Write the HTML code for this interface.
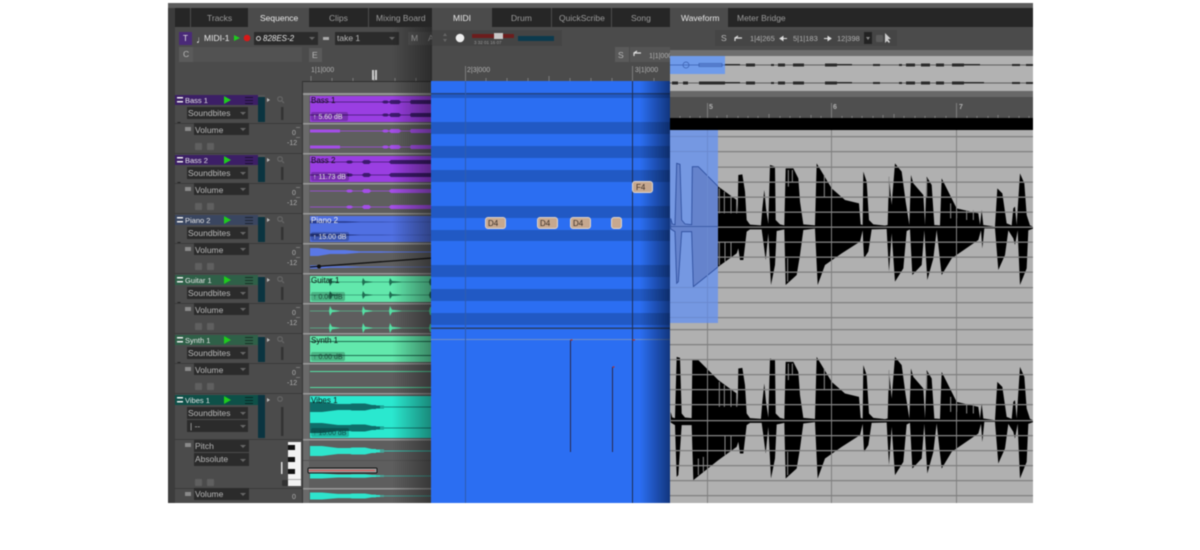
<!DOCTYPE html>
<html><head><meta charset="utf-8"><style>
html,body{margin:0;padding:0;background:#fff;width:1200px;height:550px;overflow:hidden}
svg{display:block;filter:blur(.5px)}
text{font-family:"Liberation Sans",sans-serif;font-size:8px;fill:#c4c4c4}
.t{font-size:8.5px;fill:#9a9a9a}
.a{font-size:8.5px;fill:#e8e8e8}
.n{fill:#e4e4e4;font-size:7.5px}
.d{fill:#b8b8b8;font-size:8.5px}
.c{fill:#111;font-size:8px}
.g{fill:#e8e8e8;font-size:7px}
.s{fill:#b0b0b0;font-size:7px}
</style></head><body>
<svg width="1200" height="550" viewBox="0 0 1200 550" xmlns="http://www.w3.org/2000/svg">
<defs>
<linearGradient id="sl" x1="0" x2="1" y1="0" y2="0"><stop offset="0" stop-color="#000" stop-opacity="0"/><stop offset="1" stop-color="#000" stop-opacity=".42"/></linearGradient>
<linearGradient id="sr" x1="0" x2="1" y1="0" y2="0"><stop offset="0" stop-color="#001030" stop-opacity="0"/><stop offset="1" stop-color="#001030" stop-opacity=".6"/></linearGradient>
<polygon id="wf" points="17,280 22,297 30,299 35,115 45,118 50,285 60,297 80,299 82,125 100,125 160,185 215,225 218,265 220,150 232,148 240,200 245,285 255,299 288,301 292,250 298,195 303,250 310,297 315,120 330,125 332,285 345,298 358,301 362,130 385,130 400,160 405,230 415,298 450,301 455,115 500,190 540,225 582,235 587,298 593,300 595,140 605,170 612,285 625,298 660,302 668,300 672,155 680,240 690,115 710,140 722,230 733,300 738,150 745,175 775,210 780,300 785,155 800,180 808,300 825,301 830,160 875,250 940,265 945,300 950,255 955,300 990,305 997,190 1012,205 1025,295 1040,301 1045,250 1050,245 1055,300 1065,145 1078,175 1085,270 1095,301 1104,305 1104,311 1090,316 1085,430 1065,480 1058,316 1050,360 1045,340 1030,316 1020,390 1000,435 990,310 958,310 952,370 948,316 940,345 860,400 830,450 815,315 805,400 787,465 778,316 770,420 742,450 735,313 725,318 715,430 690,470 680,325 672,440 665,312 620,313 610,380 597,400 593,316 585,350 530,385 480,420 458,480 450,311 415,315 405,390 395,450 362,480 358,313 335,318 330,420 318,480 310,325 302,405 295,350 290,313 255,313 245,320 235,405 225,405 220,370 215,385 160,425 85,485 80,320 50,320 40,470 35,475 30,320 17,312"/>
<g id="tr">
<rect x="187" y="12" width="61" height="12" fill="#2b2b2b"/><polygon points="240,17 246,17 243,20" fill="#666"/>
<rect x="258" y="0" width="7" height="27" fill="#0b3440"/><rect x="258" y="0" width="7" height="2" fill="#555"/>
<polygon points="267,3 270,5 267,7" fill="#bbb"/>
<circle cx="280" cy="4" r="2.3" fill="none" stroke="#6a6a6a"/><line x1="282" y1="6" x2="284" y2="8" stroke="#6a6a6a"/>
<rect x="281" y="12" width="2.5" height="13" fill="#333"/>
<polygon points="177,27 181,27 179,29" fill="#222"/>
<rect x="175" y="28" width="127" height="1" fill="#3a3a3a"/>
<rect x="194" y="28" width="55" height="12" fill="#2b2b2b"/><polygon points="240,33 246,33 243,36" fill="#666"/>
<rect x="185" y="32" width="6" height="4" fill="#8a8a8a"/>
<rect x="195" y="48" width="7" height="7" rx="1" fill="#5f5f5f"/><rect x="207" y="48" width="7" height="7" rx="1" fill="#5f5f5f"/>
<rect x="175" y="58" width="127" height="1" fill="#3a3a3a"/>
<rect x="177" y="2" width="6" height="1.5" fill="#eee"/><rect x="177" y="6" width="6" height="1.5" fill="#eee"/>
<polygon points="224,1 224,9 231,5" fill="#1ecb1e"/>
<rect x="245" y="2" width="8" height="1" fill="#000" opacity=".5"/><rect x="245" y="5" width="8" height="1" fill="#000" opacity=".5"/><rect x="245" y="8" width="8" height="1" fill="#000" opacity=".5"/>
<rect x="296" y="32" width="4" height="1" fill="#777"/><rect x="296" y="42" width="4" height="1" fill="#777"/>
</g>
<path id="wb1" d="M310 -.4H382L384 -1.500H387L389 -.4L391 -2H399L401 -.4H410L411 -2H432V2H411L410 .4H401L399 2H391L389 .4L387 1.500H384L382 .4H310Z"/>
<path id="wb2" d="M310 -.4H346L348 -1.500H351L353 -.4H362L364 -2H369L371 -.4H389L391 -2H432V2H391L389 .4H371L369 2H364L362 .4H353L351 1.500H348L346 .4H310Z"/>
<path id="wp" d="M310 -4H318L330 -2H345L360 -.8H380L395 -.5H432V.5H395L380 .8H360L345 2H330L318 4H310Z"/>
<path id="wg" d="M310 -.3H329L330 -5L332 -1.200L340 -.3H362L363 -5L365 -1.200L373 -.3H389L390 -5L392 -1.200L402 -.3H429L430 -4H432V4H430L429 .3H402L392 1.200L390 5L389 .3H373L365 1.200L363 5L362 .3H340L332 1.200L330 5L329 .3H310Z"/>
<path id="wv" d="M310 -5H322L338 -3H350L352 -3.500H365L372 -2H376V-1.500H384V-1H377H380V-.4H432V.4H380V1H384V1.500H376V2H372L365 3.500H352L350 3H338L322 5H310Z"/>
</defs>

<rect x="168" y="3" width="865" height="500" fill="#4b4b4b"/>
<rect x="168" y="3" width="7" height="500" fill="#3c3c3c"/>
<!-- tab bar -->
<rect x="175" y="8" width="858" height="19" fill="#262626"/>
<rect x="168" y="3" width="865" height="5" fill="#5c5c5c"/>
<rect x="190" y="8" width="1" height="19" fill="#4b4b4b"/>
<rect x="248" y="8" width="61" height="19" fill="#4b4b4b"/>
<rect x="368" y="8" width="1" height="19" fill="#4b4b4b"/>
<rect x="432" y="8" width="60" height="19" fill="#4b4b4b"/>
<rect x="551" y="8" width="1" height="19" fill="#4b4b4b"/>
<rect x="611" y="8" width="1" height="19" fill="#4b4b4b"/>
<rect x="670" y="8" width="58" height="19" fill="#4b4b4b"/>
<text class="t" x="207" y="21">Tracks</text>
<text class="a" x="260" y="21">Sequence</text>
<text class="t" x="329" y="21">Clips</text>
<text class="t" x="376" y="21">Mixing Board</text>
<text class="a" x="453" y="21">MIDI</text>
<text class="t" x="511" y="21">Drum</text>
<text class="t" x="559" y="21">QuickScribe</text>
<text class="t" x="631" y="21">Song</text>
<text class="a" x="681" y="21">Waveform</text>
<text class="t" x="737" y="21">Meter Bridge</text>

<!-- left toolbar -->
<rect x="179" y="32" width="13" height="13" fill="#4a2a78"/><text class="a" x="183" y="41" style="font-size:8px">T</text>
<text class="a" x="196" y="43" style="font-size:10px">♩</text>
<text class="a" x="204" y="41">MIDI-1</text>
<polygon points="234,35 234,41 240,38" fill="#1ecb1e"/>
<circle cx="247" cy="38" r="3.3" fill="#d81818"/>
<rect x="254" y="32" width="64" height="13" fill="#2b2b2b"/><circle cx="258.500" cy="38.500" r="2" fill="none" stroke="#ccc"/><text class="a" x="263" y="41" style="font-size:8px;font-style:italic">828ES-2</text><polygon points="309,37 315,37 312,40" fill="#666"/>
<rect x="323" y="37" width="6" height="3" fill="#aaa"/>
<rect x="335" y="32" width="64" height="13" fill="#2b2b2b"/><text class="d" x="337" y="41">take 1</text><polygon points="389,37 395,37 392,40" fill="#666"/>
<rect x="408" y="32" width="24" height="13" fill="#555"/><text class="d" x="411" y="41">M</text><text class="d" x="428" y="41">A</text>
<rect x="179" y="47" width="14" height="15" fill="#5a5a5a"/><text class="d" x="183" y="57">C</text>
<rect x="193" y="47" width="109" height="15" fill="#525252"/>
<rect x="309" y="48" width="13" height="14" fill="#5a5a5a"/><text class="d" x="312" y="58">E</text>

<!-- midi toolbar -->
<rect x="432" y="30" width="130" height="16" fill="#444"/>
<polygon points="445,33 447,36 443,36" fill="#666"/><polygon points="443,39 447,39 445,42" fill="#666"/>
<circle cx="460" cy="38" r="4.3" fill="#eee"/>
<rect x="472" y="34" width="42" height="4" fill="#6c1d1d"/><rect x="494" y="33" width="9" height="6" fill="#c8c8c8"/>
<text x="474" y="44" style="font-size:4.5px;fill:#999">3 32 01 16 07</text>
<rect x="518" y="36" width="36" height="5" fill="#0c3a4d"/>
<rect x="615" y="47" width="14" height="15" fill="#5a5a5a"/><text class="d" x="618" y="58">S</text>
<rect x="630" y="47" width="40" height="15" fill="#555"/>
<path d="M634 56V53H641M634 53L637 51" stroke="#ddd" stroke-width="1.200" fill="none"/>
<text class="s" x="649" y="58">1|1|000</text>

<!-- ruler -->
<text class="s" x="311" y="72">1|1|000</text>
<text class="s" x="467" y="72">2|3|000</text>
<text class="s" x="635" y="72">3|1|000</text>
<path d="M311 76V81M332 78V81M353 78V81M374 76V81M395 78V81M416 78V81M465.500 66V81M486 78V81M507 78V81M528 78V81M549 76V81M570 78V81M591 78V81M612 78V81M632.500 66V81M654 78V81" stroke="#888" stroke-width=".8"/>
<rect x="372" y="70" width="2" height="10" fill="#ccc"/><rect x="375" y="70" width="2" height="10" fill="#ccc"/>
<rect x="302" y="81" width="130" height="1" fill="#2f2f2f"/>

<!-- track content -->
<rect x="303" y="82" width="129" height="421" fill="#5e5e5e"/>
<rect x="302" y="81" width="1" height="422" fill="#333"/>
<rect x="303" y="82" width="6" height="421" fill="#6a6a6a"/>
<rect x="303" y="82" width="129" height="11" fill="#555"/>
<g fill="#999"><rect x="303" y="93" width="129" height="2"/><rect x="303" y="123" width="129" height="1.500"/><rect x="303" y="153" width="129" height="1.500"/><rect x="303" y="183" width="129" height="1.500"/><rect x="303" y="213" width="129" height="1.500"/><rect x="303" y="243" width="129" height="1.500"/><rect x="303" y="273" width="129" height="1.500"/><rect x="303" y="303" width="129" height="1.500"/><rect x="303" y="333" width="129" height="1.500"/><rect x="303" y="363" width="129" height="1.500"/><rect x="303" y="393" width="129" height="1.500"/><rect x="303" y="439" width="129" height="1.500"/><rect x="303" y="488" width="129" height="1.500"/></g>

<!-- Clips -->
<rect x="310" y="96" width="122" height="26" fill="#9a3ee2"/>
<rect x="310" y="156" width="122" height="26" fill="#9a3ee2"/>
<rect x="310" y="216" width="122" height="26" fill="#5070e2"/>
<rect x="310" y="276" width="122" height="26" fill="#62e8ac"/>
<rect x="310" y="336" width="122" height="26" fill="#62e8ac"/>
<rect x="310" y="396" width="122" height="42" fill="#2ae8cf"/>
<g fill="#3d1a6e">
<use href="#wb1" transform="translate(0,102)"/><use href="#wb1" transform="translate(0,115)"/>
<use href="#wb2" transform="translate(0,162)"/><use href="#wb2" transform="translate(0,175)"/>
</g>
<g fill="#26398a"><use href="#wp" transform="translate(0,222) scale(1,.35)"/><use href="#wp" transform="translate(0,235) scale(1,.35)"/></g>
<g fill="#1f6e52"><use href="#wg" transform="translate(0,282) scale(1,.8)"/><use href="#wg" transform="translate(0,295) scale(1,.8)"/>
<rect x="310" y="341" width="122" height="1"/><rect x="310" y="355" width="122" height="1"/></g>
<g fill="#0f6e6a"><use href="#wv" transform="translate(0,407)"/><use href="#wv" transform="translate(0,428)"/></g>
<text class="c" x="311" y="103">Bass 1</text><text class="c" x="311" y="163">Bass 2</text><text class="c" x="311" y="223" style="fill:#eee">Piano 2</text><text class="c" x="311" y="283">Guitar 1</text><text class="c" x="311" y="343">Synth 1</text><text class="c" x="311" y="403">Vibes 1</text>
<g fill="#000" opacity=".22"><rect x="311" y="112" width="37" height="9" rx="2"/><rect x="311" y="172" width="38" height="9" rx="2"/><rect x="311" y="232" width="38" height="9" rx="2"/><rect x="311" y="292" width="34" height="9" rx="2"/><rect x="311" y="352" width="34" height="9" rx="2"/><rect x="311" y="428" width="38" height="9" rx="2"/></g>
<text class="g" x="313" y="119">↑  5.60 dB</text><text class="g" x="313" y="179">↑  11.73 dB</text><text class="g" x="313" y="239">↑  15.00 dB</text>
<text class="g" x="313" y="299" style="fill:#1c4a38">↑  0.00 dB</text><text class="g" x="313" y="359" style="fill:#1c4a38">↑  0.00 dB</text><text class="g" x="313" y="435" style="fill:#0c4a48">↑  15.00 dB</text>

<!-- lanes -->
<g fill="#a44ee8"><use href="#wb1" transform="translate(0,131)"/><use href="#wb1" transform="translate(0,147)"/><rect x="310" y="129.500" width="30" height="3"/><rect x="310" y="145.500" width="30" height="3"/>
<use href="#wb2" transform="translate(0,191)"/><use href="#wb2" transform="translate(0,207)"/></g>
<g fill="#5a78e6"><use href="#wp" transform="translate(0,252)"/><use href="#wp" transform="translate(0,267) scale(1,.4)"/></g>
<path d="M310 267L432 258" stroke="#111" stroke-width="1.300"/><circle cx="319" cy="266.500" r="2" fill="#111"/>
<g fill="#55e0a4"><use href="#wg" transform="translate(0,311)"/><use href="#wg" transform="translate(0,328)"/><rect x="310" y="371" width="122" height="1"/><rect x="310" y="387" width="122" height="1"/></g>
<g fill="#2ee4cc"><use href="#wv" transform="translate(0,451)"/><use href="#wv" transform="translate(0,476) scale(1,.5)"/><use href="#wv" transform="translate(0,496) scale(1,.7)"/></g>
<rect x="308" y="468" width="69" height="5" rx="1" fill="#9a9a9a" stroke="#111"/><rect x="309" y="470" width="66" height="1" fill="#e05050"/>
<g fill="#545454"><rect x="303" y="460" width="129" height="1"/></g>

<!-- Track headers -->
<rect x="175" y="95" width="85" height="10" fill="#3c1f66"/>
<rect x="175" y="155" width="85" height="10" fill="#3c1f66"/>
<rect x="175" y="215" width="85" height="10" fill="#3a4660"/>
<rect x="175" y="275" width="85" height="10" fill="#2f6048"/>
<rect x="175" y="335" width="85" height="10" fill="#2f6048"/>
<rect x="175" y="395" width="85" height="10" fill="#0e5048"/>
<use href="#tr" y="95"/><use href="#tr" y="155"/><use href="#tr" y="215"/><use href="#tr" y="275"/><use href="#tr" y="335"/>
<text class="n" x="185" y="103">Bass 1</text><text class="n" x="185" y="163">Bass 2</text><text class="n" x="185" y="223">Piano 2</text><text class="n" x="185" y="283">Guitar 1</text><text class="n" x="185" y="343">Synth 1</text>
<g>
<text class="d" x="188" y="116">Soundbites</text><text class="d" x="188" y="176">Soundbites</text><text class="d" x="188" y="236">Soundbites</text><text class="d" x="188" y="296">Soundbites</text><text class="d" x="188" y="356">Soundbites</text>
<text class="d" x="195" y="133">Volume</text><text class="d" x="195" y="193">Volume</text><text class="d" x="195" y="253">Volume</text><text class="d" x="195" y="313">Volume</text><text class="d" x="195" y="373">Volume</text>
</g>
<g>
<text class="s" x="292" y="135">0</text><text class="s" x="287" y="145">-12</text>
<text class="s" x="292" y="195">0</text><text class="s" x="287" y="205">-12</text>
<text class="s" x="292" y="255">0</text><text class="s" x="287" y="265">-12</text>
<text class="s" x="292" y="315">0</text><text class="s" x="287" y="325">-12</text>
<text class="s" x="292" y="375">0</text><text class="s" x="287" y="385">-12</text>
<text class="s" x="292" y="499">0</text>
</g>
<!-- vibes -->
<rect x="177" y="397" width="6" height="1.500" fill="#eee"/><rect x="177" y="401" width="6" height="1.500" fill="#eee"/>
<text class="n" x="185" y="403">Vibes 1</text>
<polygon points="224,396 224,404 231,400" fill="#1ecb1e"/>
<rect x="245" y="397" width="8" height="1" fill="#000" opacity=".5"/><rect x="245" y="400" width="8" height="1" fill="#000" opacity=".5"/><rect x="245" y="403" width="8" height="1" fill="#000" opacity=".5"/>
<rect x="258" y="395" width="7" height="43" fill="#0b3440"/>
<polygon points="267,398 270,400 267,402" fill="#bbb"/>
<circle cx="280" cy="399" r="2.300" fill="none" stroke="#6a6a6a"/>
<rect x="281" y="407" width="2.500" height="29" fill="#333"/>
<rect x="187" y="407" width="61" height="12" fill="#2b2b2b"/><polygon points="240,412 246,412 243,415" fill="#666"/><text class="d" x="188" y="416">Soundbites</text>
<rect x="187" y="420" width="61" height="12" fill="#2b2b2b"/><polygon points="240,425 246,425 243,428" fill="#666"/><text class="d" x="190" y="429">|  --</text>
<rect x="175" y="439" width="127" height="1" fill="#3a3a3a"/>
<rect x="194" y="440" width="55" height="12" fill="#2b2b2b"/><polygon points="240,445 246,445 243,448" fill="#666"/><text class="d" x="195" y="449">Pitch</text>
<rect x="194" y="453" width="55" height="13" fill="#2b2b2b"/><polygon points="240,459 246,459 243,462" fill="#666"/><text class="d" x="195" y="462">Absolute</text>
<rect x="185" y="443" width="6" height="4" fill="#8a8a8a"/>
<rect x="195" y="479" width="7" height="7" rx="1" fill="#5f5f5f"/><rect x="207" y="479" width="7" height="7" rx="1" fill="#5f5f5f"/>
<rect x="281" y="462" width="1.500" height="12" fill="#ddd"/>
<rect x="282" y="480" width="6" height="6" rx="1" fill="#333"/>
<rect x="288" y="442" width="13" height="44" fill="#f2f2f2"/>
<rect x="288" y="445" width="7" height="5" fill="#111"/><rect x="288" y="457" width="7" height="5" fill="#111"/><rect x="288" y="469" width="7" height="5" fill="#111"/>
<rect x="288" y="479" width="13" height="1" fill="#aaa"/>
<rect x="175" y="488" width="127" height="1" fill="#3a3a3a"/>
<rect x="194" y="488" width="55" height="12" fill="#2b2b2b"/><polygon points="240,493 246,493 243,496" fill="#666"/><text class="d" x="195" y="497">Volume</text>
<rect x="185" y="492" width="6" height="4" fill="#8a8a8a"/>

<!-- shadow left pane -->
<rect x="392" y="27" width="40" height="476" fill="url(#sl)"/>

<!-- MIDI blue -->
<rect x="431" y="81" width="239" height="422" fill="#2b6ef2"/>
<g fill="#2159c4">
<rect x="431" y="94" width="239" height="4"/>
<rect x="431" y="122" width="239" height="12"/>
<rect x="431" y="146" width="239" height="12"/>
<rect x="431" y="170" width="239" height="12"/>
<rect x="431" y="206" width="239" height="12"/>
<rect x="431" y="230" width="239" height="11"/>
<rect x="431" y="265" width="239" height="12"/>
<rect x="431" y="289" width="239" height="12"/>
<rect x="431" y="313" width="239" height="12"/>
</g>
<rect x="431" y="93" width="239" height="1.300" fill="#23427e"/>
<rect x="431" y="327.500" width="239" height="1.500" fill="#2b3f66"/>
<rect x="431" y="339" width="239" height="1" fill="#6f8fc8"/>
<rect x="465" y="81" width="1" height="422" fill="#2f5cb0"/>
<rect x="632" y="81" width="1" height="422" fill="#1e2f55"/>
<path d="M570.500 340V452M612.500 367V452" stroke="#2a2a50" stroke-width="1"/>
<path d="M570.500 340H572.500M612.500 367H614.500M632.500 340H635" stroke="#b03030" stroke-width="1.300"/>
<rect x="640" y="81" width="30" height="422" fill="url(#sr)"/>

<!-- notes -->
<g fill="#c6a88f" stroke="#e0d4cc" stroke-width="1">
<rect x="485.500" y="217.500" width="20" height="11" rx="2.500"/>
<rect x="537.500" y="217.500" width="20" height="11" rx="2.500"/>
<rect x="570.500" y="217.500" width="20" height="11" rx="2.500"/>
<rect x="611.500" y="217.500" width="10" height="11" rx="2.500"/>
<rect x="632.500" y="181.500" width="20" height="11" rx="2.500"/>
</g>
<text class="c" x="488" y="226" style="fill:#3a2e26">D4</text>
<text class="c" x="540" y="226" style="fill:#3a2e26">D4</text>
<text class="c" x="573" y="226" style="fill:#3a2e26">D4</text>
<text class="c" x="636" y="190" style="fill:#3a2e26">F4</text>

<!-- Waveform pane toolbar -->
<rect x="670" y="27" width="363" height="23" fill="#4b4b4b"/>
<rect x="715" y="30" width="182" height="16" fill="#454545"/>
<text class="d" x="721" y="41">S</text>
<path d="M735 41V38H742M735 38L738 36" stroke="#ddd" stroke-width="1.200" fill="none"/>
<text class="s" x="750" y="41" style="font-size:7.500px">1|4|265</text>
<path d="M780 38.500H787M780 38.500L783 36.500V40.500Z" stroke="#ddd" fill="#ddd"/>
<text class="s" x="793" y="41" style="font-size:7.500px">5|1|183</text>
<path d="M824 38.500H831M831 38.500L828 36.500V40.500Z" stroke="#ddd" fill="#ddd"/>
<text class="s" x="837" y="41" style="font-size:7.500px">12|398</text>
<rect x="864" y="32" width="8" height="12" fill="#222"/><polygon points="866,37 870,37 868,40" fill="#888"/>
<rect x="876" y="35" width="7" height="7" rx="1" fill="#5a5a5a"/>
<polygon points="885,33 885,43 887,41 889,43 890,42 888,39 891,39" fill="#ccc"/>

<!-- overview -->
<rect x="670" y="50" width="363" height="6" fill="#6e6e6e"/>
<rect x="670" y="56" width="363" height="35" fill="#b2b2b2"/>
<rect x="670" y="91" width="363" height="6" fill="#686868"/>
<g fill="#2a2a2a">
<rect x="670" y="64.700" width="363" height=".6"/><rect x="670" y="82.700" width="363" height=".6"/>
<rect x="725" y="64" width="15" height="1.500"/><rect x="746" y="63.500" width="9" height="3"/><rect x="771" y="64" width="3" height="2"/><rect x="778" y="63.500" width="7" height="3"/><rect x="793" y="63.500" width="11" height="3"/><rect x="825" y="63.500" width="12" height="3"/><rect x="837" y="64" width="15" height="1.500"/><rect x="873" y="64" width="7" height="2"/><rect x="899" y="64" width="3" height="2"/><rect x="906" y="63.500" width="9" height="3"/><rect x="921" y="63.500" width="9" height="3"/><rect x="936" y="63.500" width="8" height="3"/><rect x="952" y="63.500" width="12" height="3"/><rect x="964" y="64" width="16" height="1.500"/><rect x="1012" y="64" width="8" height="2"/><rect x="1026" y="64" width="7" height="2"/>
<rect x="672" y="81.500" width="6" height="3"/><rect x="683" y="81.500" width="5" height="3"/><rect x="699" y="81.500" width="26" height="3"/><rect x="725" y="82" width="15" height="1.500"/><rect x="746" y="81.500" width="9" height="3"/><rect x="771" y="82" width="3" height="2"/><rect x="778" y="81.500" width="7" height="3"/><rect x="793" y="81.500" width="11" height="3"/><rect x="825" y="81.500" width="12" height="3"/><rect x="837" y="82" width="15" height="1.500"/><rect x="873" y="82" width="7" height="2"/><rect x="899" y="82" width="3" height="2"/><rect x="906" y="81.500" width="9" height="3"/><rect x="921" y="81.500" width="9" height="3"/><rect x="936" y="81.500" width="8" height="3"/><rect x="952" y="81.500" width="12" height="3"/><rect x="964" y="82" width="20" height="1.500"/><rect x="1012" y="82" width="8" height="2"/><rect x="1026" y="82" width="7" height="2"/>
</g>
<rect x="670" y="56" width="55" height="18" fill="#6f9bea"/>
<path d="M670 65H725M683 65a3 3 0 1 0 6 0a3 3 0 1 0 -6 0M699 63.500H722V66.500H699Z" stroke="#3a5fae" stroke-width=".7" fill="none"/>

<!-- wave ruler -->
<rect x="670" y="97" width="363" height="21" fill="#4f4f4f"/>
<text class="s" x="709" y="109" style="font-weight:bold">5</text>
<text class="s" x="833" y="109" style="font-weight:bold">6</text>
<text class="s" x="959" y="109" style="font-weight:bold">7</text>
<path d="M707.500 103V118M831.500 103V118M956.500 103V118M680 116V118M690 116V118M700 116V118M717 116V118M727 115V118M738 116V118M748 116V118M758 116V118M769 114V118M780 116V118M790 116V118M800 116V118M811 115V118M821 116V118M842 116V118M852 116V118M862 116V118M873 116V118M883 115V118M894 114V118M904 116V118M915 116V118M925 116V118M935 116V118M946 116V118M967 116V118M977 116V118M988 116V118M998 115V118M1009 116V118M1019 116V118M1029 116V118" stroke="#8a8a8a" stroke-width=".8"/>
<rect x="670" y="118" width="363" height="12" fill="#000"/>

<!-- wave area -->
<rect x="670" y="130" width="363" height="373" fill="#b0b0b0"/>
<!-- waves -->
<g transform="translate(665,125) scale(.33333)"><use href="#wf" fill="#000"/>
<path d="M163 190V265M178 200V265M198 210V265M215 225V265M163 420V350M180 410V350M198 395V350M370 135V185M382 135V170M478 150V215M500 190V215M368 470V400M672 155V215M785 160V215M857 235V280M875 255V280M905 255V285M925 255V285" stroke="#8c8c8c" stroke-width="3" fill="none"/></g>
<g transform="translate(665,318.500) scale(.33333)"><use href="#wf" fill="#000"/>
<path d="M163 190V265M178 200V265M198 210V265M215 225V265M100 420V470M115 415V460M180 410V350M198 395V350M370 135V185M382 135V170M478 150V215M500 190V215M368 470V400M672 155V215M785 160V215M857 235V280M875 255V280M905 255V285M925 255V285" stroke="#8c8c8c" stroke-width="3" fill="none"/></g>
<!-- grid -->
<g fill="#808080">
<rect x="670" y="136" width="363" height="1.300"/><rect x="670" y="151" width="363" height="1.300"/><rect x="670" y="166.500" width="363" height="1.300"/><rect x="670" y="181.500" width="363" height="1.300"/><rect x="670" y="196.500" width="363" height="1.300"/><rect x="670" y="211.500" width="363" height="1.300"/><rect x="670" y="226.500" width="363" height="1.300"/><rect x="670" y="241.500" width="363" height="1.300"/><rect x="670" y="256.500" width="363" height="1.300"/><rect x="670" y="271.500" width="363" height="1.300"/><rect x="670" y="287" width="363" height="1.300"/><rect x="670" y="302" width="363" height="1.300"/><rect x="670" y="317" width="363" height="1.300"/>
<rect x="670" y="329" width="363" height="1.300"/><rect x="670" y="344" width="363" height="1.300"/><rect x="670" y="359" width="363" height="1.300"/><rect x="670" y="374" width="363" height="1.300"/><rect x="670" y="389" width="363" height="1.300"/><rect x="670" y="404" width="363" height="1.300"/><rect x="670" y="420" width="363" height="1.300"/><rect x="670" y="435" width="363" height="1.300"/><rect x="670" y="450" width="363" height="1.300"/><rect x="670" y="465" width="363" height="1.300"/><rect x="670" y="480" width="363" height="1.300"/><rect x="670" y="495" width="363" height="1.300"/>
<rect x="707" y="130" width="1" height="373"/><rect x="831" y="130" width="1" height="373"/><rect x="956" y="130" width="1" height="373"/>
</g>
<!-- selection overlay -->
<rect x="670" y="130" width="48" height="193" fill="#7598e2"/>
<clipPath id="cp"><rect x="15" y="15" width="144" height="579"/></clipPath>
<g transform="translate(665,125) scale(.33333)"><g clip-path="url(#cp)"><use href="#wf" fill="#6583cc" stroke="#2c4d9c" stroke-width="2.500"/></g></g>
<g fill="#6a8ad0"><rect x="670" y="136" width="48" height="1"/><rect x="670" y="151" width="48" height="1"/><rect x="670" y="287" width="48" height="1"/><rect x="670" y="302" width="48" height="1"/><rect x="670" y="317" width="48" height="1"/><rect x="707" y="130" width="1" height="193"/></g>
<rect x="670" y="226" width="48" height="1" fill="#3d5ea8"/>
</svg>
</body></html>
